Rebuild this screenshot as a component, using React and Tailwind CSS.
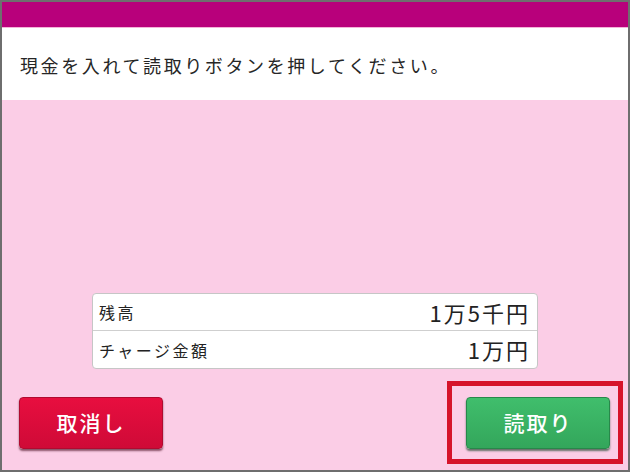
import React from 'react';

const font = { fontFamily: '"Noto Sans CJK JP", "Noto Sans", sans-serif' };

const Row = ({ label, value, last }) => (
  <div className={`flex items-center justify-between h-[37px] pl-[6px] pr-[7px] ${last ? '' : 'border-b border-[#cfcfcf]'}`}>
    <span className="text-[16px] tracking-[2.5px] text-[#222]">{label}</span>
    <span className="text-[22px] tracking-[2px] text-[#222]">{value}</span>
  </div>
);

export default function App() {
  return (
    <div className="w-[630px] h-[472px] border-2 border-[#6e6e6e] flex flex-col bg-[#fbcde6]" style={font}>
      {/* top bar */}
      <div className="h-[26px] bg-[#b8007b] border-b border-[#f3b3d8]" />
      <div className="h-[72px] bg-white flex items-center pl-[18px] pt-[2px]">
        <p className="text-[18px] tracking-[2.6px] text-[#262626]">現金を入れて読取りボタンを押してください。</p>
      </div>

      <div className="flex-1 flex flex-col justify-end pb-[21px]">
        <div className="mx-auto w-[446px] bg-white border border-[#c6c6c6] rounded-[4px]">
          <Row label="残高" value="1万5千円" />
          <Row label="チャージ金額" value="1万円" last />
        </div>

        <div className="mt-[28px] flex justify-between pl-[17px] pr-[18px]">
          <button className="w-[144px] h-[52px] rounded-[4px] border border-[#b00a30] bg-gradient-to-b from-[#e80e3f] to-[#cf0a37] text-white text-[21px] font-medium tracking-[2px] shadow-[0_2px_2px_rgba(60,0,20,0.6)]">
            取消し
          </button>
          <div className="relative">
            <button className="w-[144px] h-[52px] rounded-[4px] border border-[#27884a] bg-gradient-to-b from-[#40be6c] to-[#33a65b] text-white text-[21px] font-medium tracking-[2px] shadow-[0_2px_2px_rgba(0,50,20,0.6)]">
              読取り
            </button>
            <div className="absolute left-[-19px] top-[-16px] w-[176px] h-[83px] border-[5px] border-[#d6132a]" />
          </div>
        </div>
      </div>
    </div>
  );
}
